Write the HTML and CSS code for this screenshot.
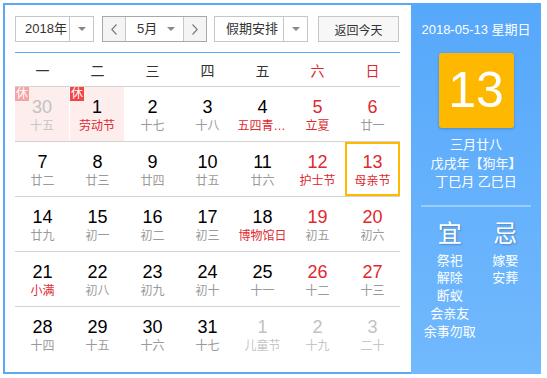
FILE: index.html
```html
<!DOCTYPE html>
<html lang="zh-CN">
<head>
  <meta charset="UTF-8" />
  <title>万年历</title>
  <link rel="stylesheet" href="styles.css">
</head>
<body>

  <div class="calendar">
    <div class="main">
      <div class="toolbar">
        <div class="select year-select">
          <span class="select-text">2018年</span>
          <span class="select-arrow"><i class="caret"></i></span>
        </div>
        <div class="month-group">
          <span class="nav-btn">
            <svg width="6" height="11" viewBox="0 0 6 11"><polyline points="5.5,0.5 0.8,5.5 5.5,10.5" fill="none" stroke="#777" stroke-width="1.1"/></svg>
          </span>
          <span class="month-select">5月<i class="caret"></i></span>
          <span class="nav-btn">
            <svg width="6" height="11" viewBox="0 0 6 11"><polyline points="0.5,0.5 5.2,5.5 0.5,10.5" fill="none" stroke="#777" stroke-width="1.1"/></svg>
          </span>
        </div>
        <div class="select holiday-select">
          <span class="select-text">假期安排</span>
          <span class="select-arrow"><i class="caret"></i></span>
        </div>
        <button class="today-btn">返回今天</button>
      </div>

      <div class="week-head">
        <span>一</span><span>二</span><span>三</span><span>四</span><span>五</span>
        <span class="red">六</span><span class="red">日</span>
      </div>

      <div class="days" id="days">
        <!-- rows inserted here -->
      </div>
    </div>

    <aside class="side">
      <div class="side-date">2018-05-13 星期日</div>
      <div class="big-day">13</div>
      <div class="side-lunar">
        <p>三月廿八</p>
        <p>戊戌年【狗年】</p>
        <p>丁巳月 乙巳日</p>
      </div>
      <div class="side-line"></div>
      <div class="yiji">
        <div class="yiji-col">
          <h3>宜</h3>
          <p>祭祀</p>
          <p>解除</p>
          <p>断蚁</p>
          <p>会亲友</p>
          <p>余事勿取</p>
        </div>
        <div class="yiji-col">
          <h3>忌</h3>
          <p>嫁娶</p>
          <p>安葬</p>
        </div>
      </div>
    </aside>
  </div>

  <script>
    // [day, lunar text, flags]  o = other month, f = festival, r = rest day, t = today
    const days = [
      [30, "十五", "o r"], [1, "劳动节", "f r"], [2, "十七"], [3, "十八"], [4, "五四青年节", "f"], [5, "立夏", "f"], [6, "廿一"],
      [7, "廿二"], [8, "廿三"], [9, "廿四"], [10, "廿五"], [11, "廿六"], [12, "护士节", "f"], [13, "母亲节", "f t"],
      [14, "廿九"], [15, "初一"], [16, "初二"], [17, "初三"], [18, "博物馆日", "f"], [19, "初五"], [20, "初六"],
      [21, "小满", "f"], [22, "初八"], [23, "初九"], [24, "初十"], [25, "十一"], [26, "十二"], [27, "十三"],
      [28, "十四"], [29, "十五"], [30, "十六"], [31, "十七"], [1, "儿童节", "o"], [2, "十九", "o"], [3, "二十", "o"]
    ];

    const daysEl = document.getElementById("days");
    let row;

    days.forEach((d, i) => {
      if (i % 7 === 0) {
        row = document.createElement("div");
        row.className = "week";
        daysEl.appendChild(row);
      }
      const flags = (d[2] || "").split(" ");
      const cell = document.createElement("div");
      cell.className = "day";
      if (i % 7 >= 5) cell.classList.add("weekend");
      if (flags.includes("o")) cell.classList.add("other");
      if (flags.includes("r")) cell.classList.add("rest");
      if (flags.includes("t")) cell.classList.add("today");
      cell.innerHTML = `
        ${flags.includes("r") ? '<i class="rest-tag">休</i>' : ''}
        <span class="num">${d[0]}</span>
        <span class="lunar${flags.includes("f") ? ' fest' : ''}">${d[1]}</span>`;
      row.appendChild(cell);
    });
  </script>
</body>
</html>
```

FILE: styles.css
```css
body {
  margin: 0;
  font-family: "Liberation Sans", "Noto Sans CJK SC", sans-serif;
  color: #333;
  background: #fff;
}

.calendar {
  display: flex;
  margin: 3px;
  width: 538px;
  height: 371px;
}

.main {
  flex: 1;
  border: 2px solid #5ba8f5;
  border-right: none;
  padding: 11px 11px 0 10px;
}

/* Toolbar */
.toolbar {
  display: flex;
  height: 26px;
  padding-bottom: 10px;
  border-bottom: 1px solid #5ba8f5;
  font-size: 13px;
}

.select {
  display: flex;
  border: 1px solid #c6c6c6;
  background: #fff;
  box-sizing: border-box;
  height: 26px;
}

.select-text {
  flex: 1;
  line-height: 24px;
  padding-left: 11px;
  white-space: nowrap;
}

.select-arrow {
  width: 23px;
  border-left: 1px solid #c6c6c6;
  display: flex;
  align-items: center;
  justify-content: center;
}

.caret {
  display: inline-block;
  width: 0;
  height: 0;
  border-left: 4px solid transparent;
  border-right: 4px solid transparent;
  border-top: 4px solid #888;
}

.year-select {
  width: 79px;
}

.year-select .select-text {
  padding-left: 9px;
}

.holiday-select {
  width: 94px;
  margin-left: 7px;
}

.month-group {
  display: flex;
  width: 105px;
  height: 26px;
  box-sizing: border-box;
  margin-left: 8px;
  border: 1px solid #a8a8a8;
}

.nav-btn {
  width: 22px;
  background: #f4f4f4;
  display: flex;
  align-items: center;
  justify-content: center;
}

.month-select {
  flex: 1;
  display: flex;
  align-items: center;
  justify-content: space-between;
  padding: 0 8px 0 11px;
  border-left: 1px solid #c6c6c6;
  border-right: 1px solid #c6c6c6;
  line-height: 24px;
}

.today-btn {
  margin-left: 10px;
  width: 81px;
  height: 26px;
  border: 1px solid #c6c6c6;
  background: #f7f7f7;
  font-family: inherit;
  font-size: 12px;
  color: #333;
  padding: 0;
}

/* Week header */
.week-head {
  display: grid;
  grid-template-columns: repeat(7, 55px);
  height: 33px;
  align-items: center;
  text-align: center;
  font-size: 14px;
  color: #333;
}

.week-head .red {
  color: #e0282e;
}

/* Days grid */
.week {
  display: grid;
  grid-template-columns: repeat(7, 55px);
  height: 55px;
  box-sizing: border-box;
  border-top: 1px solid #d2d2d2;
}

.day {
  position: relative;
  display: flex;
  flex-direction: column;
  align-items: center;
  padding-top: 8px;
}

.day .num {
  font-size: 18px;
  line-height: 24px;
  color: #000;
}

.day .lunar {
  font-size: 12px;
  line-height: 14px;
  color: #9a9a9a;
  max-width: 50px;
  white-space: nowrap;
  overflow: hidden;
  text-overflow: ellipsis;
}

.day .lunar.fest {
  color: #e0282e;
}

.day.weekend .num {
  color: #e0282e;
}

.day.other .num {
  color: #c2c2c2;
}

.day.other .lunar {
  color: #c6c6c6;
}

.day.rest {
  background: #fdeded;
  border-right: 1px solid #fff;
}

.rest-tag {
  position: absolute;
  top: 0;
  left: 0;
  width: 14px;
  height: 14px;
  background: #f24545;
  color: #fff;
  font-style: normal;
  font-size: 12px;
  line-height: 14px;
  text-align: center;
}

.day.other .rest-tag {
  background: #f7a3a3;
}

.day.today {
  box-shadow: inset 0 0 0 2px #ffb900;
}

/* Side panel */
.side {
  width: 130px;
  background: linear-gradient(#56a8fb, #72b9fd);
  color: #fff;
  text-align: center;
  padding-top: 18px;
}

.side-date {
  font-size: 13px;
  line-height: 18px;
}

.big-day {
  width: 75px;
  height: 75px;
  margin: 14px auto 0;
  background: #ffb800;
  border-radius: 3px;
  box-shadow: 0 1px 3px rgba(0, 0, 0, 0.2);
  font-size: 50px;
  line-height: 75px;
}

.side-lunar {
  margin-top: 8px;
  font-size: 13px;
}

.side-lunar p {
  margin: 0;
  line-height: 18.5px;
}

.side-line {
  height: 2px;
  margin: 13px 10px 0;
  background: rgba(255, 255, 255, 0.35);
}

.yiji {
  display: flex;
  padding: 0 8px 0 11px;
  margin-top: 13px;
}

.yiji-col {
  flex: 1;
}

.yiji-col h3 {
  margin: 0 0 4px;
  font-size: 24px;
  font-weight: normal;
  line-height: 28px;
  text-shadow: 1px 1px 2px rgba(0, 0, 0, 0.25);
}

.yiji-col p {
  margin: 0;
  font-size: 13px;
  line-height: 17.8px;
}
```
